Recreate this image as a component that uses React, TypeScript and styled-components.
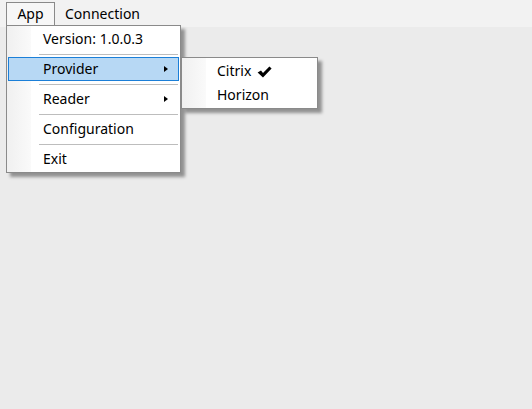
import styled, { createGlobalStyle } from "styled-components";

const GlobalStyle = createGlobalStyle`
  html, body {
    margin: 0;
    padding: 0;
    background: #ebebeb;
    font-family: "Noto Sans", "Open Sans", sans-serif;
    font-size: 14px;
    color: #000;
  }
`;

type Entry =
  | { kind: "item"; label: string; submenu?: boolean; active?: boolean }
  | { kind: "sep" };

const appMenu: Entry[] = [
  { kind: "item", label: "Version: 1.0.0.3" },
  { kind: "sep" },
  { kind: "item", label: "Provider", submenu: true, active: true },
  { kind: "sep" },
  { kind: "item", label: "Reader", submenu: true },
  { kind: "sep" },
  { kind: "item", label: "Configuration" },
  { kind: "sep" },
  { kind: "item", label: "Exit" },
];

const providers = [
  { label: "Citrix", checked: true },
  { label: "Horizon", checked: false },
];

const Check = () => (
  <svg width="15" height="12" viewBox="0 0 15 12">
    <path
      d="M0.6 6.4 L4 4.4 L6 7 L12.4 0.4 L14.6 2.4 L6 11.6 Z"
      fill="#000"
    />
  </svg>
);

export const App = () => {
  return (
    <Window>
      <GlobalStyle />
      <MenuBar>
        <TopItem $open>App</TopItem>
        <TopItem>Connection</TopItem>
      </MenuBar>

      <Dropdown>
        {appMenu.map((entry, i) =>
          entry.kind === "sep" ? (
            <Separator key={i} />
          ) : (
            <Item key={i} $active={entry.active}>
              {entry.label}
              {entry.submenu && <Arrow />}
              {entry.active && (
                <SubMenu>
                  {providers.map((p) => (
                    <SubItem key={p.label}>
                      {p.label}
                      {p.checked && (
                        <CheckSlot>
                          <Check />
                        </CheckSlot>
                      )}
                    </SubItem>
                  ))}
                </SubMenu>
              )}
            </Item>
          )
        )}
      </Dropdown>
    </Window>
  );
};

export default App;

const Window = styled.div`
  position: relative;
  width: 532px;
  height: 409px;
  overflow: hidden;
  background: #ebebeb;
`;

const MenuBar = styled.div`
  height: 27px;
  display: flex;
  align-items: flex-start;
  padding: 2px 0 0 6px;
  box-sizing: border-box;
  background: #f2f2f2;
`;

const TopItem = styled.div<{ $open?: boolean }>`
  height: 24px;
  display: flex;
  align-items: center;
  justify-content: center;
  box-sizing: border-box;
  border: 1px solid ${(p) => (p.$open ? "#8a8a8a" : "transparent")};
  border-bottom: none;
  background: ${(p) => (p.$open ? "#f7f7f7" : "transparent")};
  width: ${(p) => (p.$open ? "49px" : "auto")};
  padding: ${(p) => (p.$open ? "0" : "0 9px 0 9px")};
  line-height: 1;
  padding-bottom: 2px;
`;

const Dropdown = styled.div`
  position: absolute;
  left: 6px;
  top: 25px;
  width: 175px;
  box-sizing: border-box;
  padding: 1px;
  border: 1px solid #8a8a8a;
  background: linear-gradient(
    to right,
    #f0f0f0 0px,
    #fafafa 24px,
    #ffffff 24px
  );
  box-shadow: 4px 4px 3px rgba(0, 0, 0, 0.38);
`;

const Item = styled.div<{ $active?: boolean }>`
  position: relative;
  height: 24px;
  box-sizing: border-box;
  display: flex;
  align-items: center;
  padding-left: 34px;
  padding-bottom: 2px;
  border: 1px solid ${(p) => (p.$active ? "#1b7fd8" : "transparent")};
  background: ${(p) => (p.$active ? "#b7d8f4" : "transparent")};
  white-space: nowrap;
`;

const Arrow = styled.span`
  margin-left: auto;
  margin-right: 10px;
  margin-top: 1px;
  width: 0;
  height: 0;
  border-top: 3.5px solid transparent;
  border-bottom: 3.5px solid transparent;
  border-left: 4px solid #000;
`;

const Separator = styled.div`
  height: 6px;
  display: flex;
  align-items: center;
  margin: 0 1px 0 31px;

  &::before {
    content: "";
    flex: 1;
    height: 1px;
    background: #bdbdbd;
  }
`;

const SubMenu = styled.div`
  position: absolute;
  left: calc(100% + 3px);
  top: -1px;
  width: 137px;
  box-sizing: border-box;
  padding: 1px;
  border: 1px solid #8a8a8a;
  background: linear-gradient(
    to right,
    #f0f0f0 0px,
    #fafafa 24px,
    #ffffff 24px
  );
  box-shadow: 4px 4px 3px rgba(0, 0, 0, 0.38);
`;

const SubItem = styled.div`
  height: 24px;
  box-sizing: border-box;
  display: flex;
  align-items: center;
  padding-left: 33px;
  padding-bottom: 2px;
  border: 1px solid transparent;
`;

const CheckSlot = styled.span`
  display: inline-flex;
  margin-left: 6px;
  margin-top: 3px;
`;
